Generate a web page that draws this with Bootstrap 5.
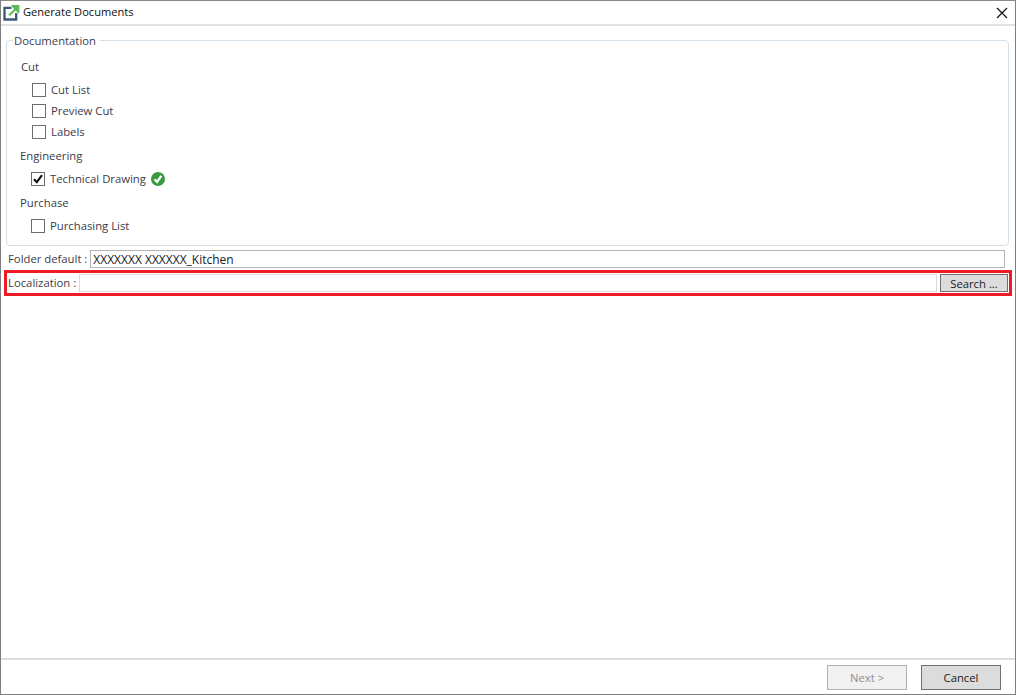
<!DOCTYPE html>
<html lang="en">
<head>
<meta charset="utf-8">
<title>Generate Documents</title>
<link href="https://cdn.jsdelivr.net/npm/bootstrap@5.3.0/dist/css/bootstrap.min.css" rel="stylesheet">
<style>
html,body{height:100%;}
body{background:#fff;color:#3b3b4a;font-family:"Open Sans","Noto Sans","Liberation Sans",sans-serif;font-size:11.3px;line-height:16px;overflow:hidden;}
.win{width:1016px;height:695px;border:1px solid #7f7f7f;border-top-color:#8a8a8a;}
.titlebar{height:25px;flex:none;border-bottom:2px solid #dfe3e6;padding-left:2px;}
.titlebar-text{color:#111;margin-left:3px;font-size:11.1px;position:relative;top:-1px;}
.close-x{margin-right:7px;line-height:0;}
.docs-box{margin:5px 6px 0 5px;height:215px;border:1px solid #d5dfe7;border-radius:4px;padding:0 0 0 14px;min-width:0;}
.docs-box legend{float:none;width:auto;font-size:11.3px;line-height:16px;margin:0 0 0 -8px;padding:2px 4px 0 1px;color:#3b3b4a;}
.grp{height:16px;}
.grp-cut{margin-top:10px;}
.grp-eng{margin-top:6px;margin-left:-1px;}
.grp-pur{margin-top:5px;margin-left:-1px;}
.item{height:21px;gap:5px;margin-left:11px;}
.item-first{margin-top:4px;}
.item-eng{margin-left:10px;gap:5px;margin-top:4px;height:22px;}
.item-pur{margin-left:10px;gap:5px;margin-top:4px;height:22px;}
.tick{width:14px;height:14px;border:1px solid #6d6d6d;background:#fff;flex:none;line-height:0;}
.ok-ico{margin-left:0;line-height:0;}
.field{height:18px;border:1px solid #b4b4b4;background:#fff;color:#1a1a1a;padding:0 2px;font-size:11.3px;line-height:16px;}
.field-value{font-size:12px;padding-top:1px;}
.row-folder{margin:4px 10px 0 7px;gap:3px;height:18px;}
.row-local{margin:2px 3px 0 3px;height:26px;border:3px solid #ed1c24;padding:0 1px 0 1px;}
.row-local .field{border-color:#dadada;margin:0 3px 0 3px;height:18px;}
.btn-search{width:68px;height:18px;background:#dcdcdc;border:1px solid #707070;color:#1a1a1a;border-radius:0;padding:0;font-size:11.3px;line-height:15px;flex:none;}
.spacer{flex:1 1 auto;}
.footer-bar{height:36px;flex:none;border-top:2px solid #dcdcdc;padding:5px 14px 0 0;gap:14px;}
.btn-win{width:80px;height:25px;border-radius:0;padding:0;font-size:11.3px;line-height:21px;}
.btn-win-off,.btn-win-off:disabled{background:#f1f1f1;border:1px solid #adb2b5;color:#8d8d8d;opacity:1;}
.btn-win-on{background:#dcdcdc;border:1px solid #707070;color:#1a1a1a;}
</style>
</head>
<body>
<div class="win d-flex flex-column">
  <div class="titlebar d-flex align-items-center">
    <svg width="17" height="17" viewBox="0 0 16 16" aria-hidden="true">
      <path d="M8 3.6H1.4v11h11V8.4" fill="#fff" stroke="#3c5a78" stroke-width="2.2"/>
      <path d="M5 10l5.4-5.4L8 2.2V1h7.4v7.4h-1.2l-2.4-2.4L6.4 11.4z" fill="#5cb85c"/>
    </svg>
    <span class="titlebar-text">Generate Documents</span>
    <span class="ms-auto close-x">
      <svg width="12" height="12" viewBox="0 0 12 12" aria-hidden="true"><path d="M1 1l10 10M11 1L1 11" stroke="#111" stroke-width="1.2" fill="none"/></svg>
    </span>
  </div>

  <fieldset class="docs-box">
    <legend>Documentation</legend>
    <div class="grp grp-cut">Cut</div>
    <div class="item item-first d-flex align-items-center"><span class="tick"></span><span>Cut List</span></div>
    <div class="item d-flex align-items-center"><span class="tick"></span><span>Preview Cut</span></div>
    <div class="item d-flex align-items-center"><span class="tick"></span><span>Labels</span></div>
    <div class="grp grp-eng">Engineering</div>
    <div class="item item-eng d-flex align-items-center">
      <span class="tick"><svg width="12" height="12" viewBox="0 0 12 12" aria-hidden="true"><path d="M2 6.2l2.8 3L10 2.2" stroke="#111" stroke-width="2.1" fill="none"/></svg></span>
      <span>Technical Drawing</span>
      <span class="ok-ico"><svg width="14" height="14" viewBox="0 0 14 14" aria-hidden="true"><circle cx="7" cy="7" r="7" fill="#3a9a3f"/><path d="M3.6 7.2l2.5 2.7 4.2-6" stroke="#fff" stroke-width="2.3" fill="none"/></svg></span>
    </div>
    <div class="grp grp-pur">Purchase</div>
    <div class="item item-pur d-flex align-items-center"><span class="tick"></span><span>Purchasing List</span></div>
  </fieldset>

  <div class="row-folder d-flex align-items-center">
    <span class="text-nowrap">Folder default :</span>
    <div class="field field-value flex-grow-1">XXXXXXX XXXXXX_Kitchen</div>
  </div>

  <div class="row-local d-flex align-items-center">
    <span class="text-nowrap">Localization :</span>
    <div class="field flex-grow-1"></div>
    <button type="button" class="btn btn-search">Search ...</button>
  </div>

  <div class="spacer"></div>

  <div class="footer-bar d-flex justify-content-end">
    <button type="button" class="btn btn-win btn-win-off" disabled>Next &gt;</button>
    <button type="button" class="btn btn-win btn-win-on">Cancel</button>
  </div>
</div>
<script src="https://cdn.jsdelivr.net/npm/bootstrap@5.3.0/dist/js/bootstrap.bundle.min.js"></script>
</body>
</html>
